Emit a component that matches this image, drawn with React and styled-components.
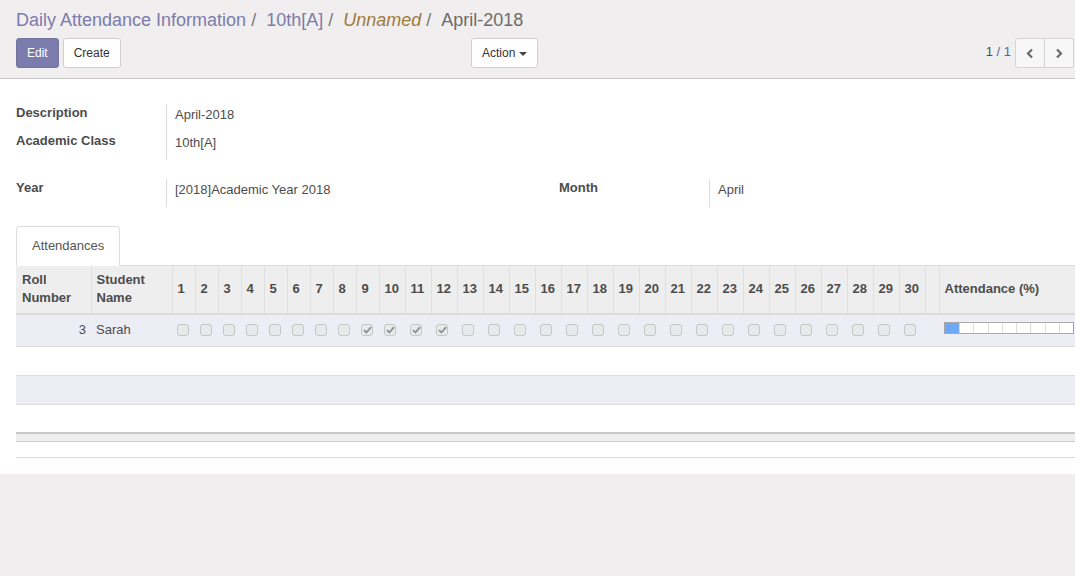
import React from 'react';
import styled, { createGlobalStyle } from 'styled-components';

const Global = createGlobalStyle`
  html, body { margin: 0; padding: 0; background: #f0eeee; overflow: hidden; }
  body { font-family: "Liberation Sans", Arial, sans-serif; font-size: 13px; color: #4c4c4c; }
  #root { width: 1075px; }
  * { box-sizing: border-box; }
`;

const ControlPanel = styled.div`
  background: #f0eeee;
  border-bottom: 1px solid #c8c8c8;
  padding: 7px 1px 10px 16px;
`;

const Breadcrumb = styled.ol`
  display: flex;
  margin: 0 0 5px;
  padding: 0;
  list-style: none;
  font-size: 18px;
  line-height: 26px;
  height: 26px;
`;

const Crumb = styled.li`
  color: ${p => (p.$active ? '#6c6c6c' : p.$unnamed ? '#9e7a3c' : '#7c7bad')};
  font-style: ${p => (p.$unnamed ? 'italic' : 'normal')};
  &:not(:first-child)::before {
    content: "/\\00a0";
    padding: 0 5px;
    color: #777;
    font-style: normal;
  }
`;

const ButtonsRow = styled.div`
  display: grid;
  grid-template-columns: 455px auto 1fr auto;
  align-items: center;
  height: 30px;
`;

const LeftButtons = styled.div`
  display: flex;
  gap: 4px;
`;

const Button = styled.button`
  height: 30px;
  padding: 0 10px;
  font-family: inherit;
  font-size: 12px;
  border-radius: 3px;
  border: 1px solid ${p => (p.$primary ? '#75749f' : '#cfcfcf')};
  background: ${p => (p.$primary ? '#7c7bad' : '#fff')};
  color: ${p => (p.$primary ? '#fff' : '#333')};
  display: inline-flex;
  align-items: center;
  gap: 4px;
`;

const Caret = styled.span`
  display: inline-block;
  width: 0;
  height: 0;
  border-left: 4px solid transparent;
  border-right: 4px solid transparent;
  border-top: 4px solid #444;
  margin-top: 1px;
`;

const Pager = styled.div`
  grid-column: 4;
  display: flex;
  align-items: center;
  gap: 4px;
`;

const PagerValue = styled.span`
  font-size: 13px;
  line-height: 16px;
  margin-top: -2px;
  color: #4c4c4c;
`;

const PagerLimit = styled.span`
  color: #55679a;
`;

const PagerGroup = styled.div`
  display: flex;
`;

const PagerBtn = styled.button`
  width: 30px;
  height: 30px;
  padding: 0;
  border: 1px solid #d4d4d4;
  background: #f7f7f7;
  display: flex;
  align-items: center;
  justify-content: center;
  border-radius: ${p => (p.$side === 'left' ? '3px 0 0 3px' : '0 3px 3px 0')};
  margin-left: ${p => (p.$side === 'left' ? '0' : '-1px')};
`;

const Form = styled.div`
  background: #fff;
  padding: 25px 16px 16px;
`;

const GroupRow = styled.div`
  display: grid;
  grid-template-columns: 543px 1fr;
  & + & { margin-top: 19px; }
`;

const InnerGroup = styled.div`
  display: flex;
  flex-direction: column;
`;

const Field = styled.div`
  display: grid;
  grid-template-columns: 151px 1fr;
`;

const Label = styled.div`
  font-weight: bold;
  line-height: 18px;
  padding: 0 0 10px;
  border-right: 1px solid #ddd;
  color: #4c4c4c;
`;

const Value = styled.div`
  line-height: 18px;
  padding: 2px 0 8px 8px;
  color: #4c4c4c;
`;

const Notebook = styled.div`
  margin-top: 19px;
  margin-right: -16px;
`;

const Tabs = styled.div`
  display: flex;
  border-bottom: 1px solid #ddd;
`;

const Tab = styled.div`
  padding: 10px 15px;
  line-height: 18px;
  border: 1px solid #ddd;
  border-bottom-color: transparent;
  border-radius: 4px 4px 0 0;
  background: #fff;
  margin-bottom: -1px;
  color: #555;
`;

const TableWrap = styled.div`
  overflow: hidden;
`;

const Table = styled.table`
  border-collapse: collapse;
  table-layout: fixed;
  width: 1073px;
`;

const Col = styled.col`
  width: ${p => p.$w}px;
`;

const Th = styled.th`
  background: #eee;
  font-weight: bold;
  text-align: left;
  vertical-align: middle;
  padding: 5px 5px 6px;
  line-height: 18px;
  border-left: 1px solid #dfdfdf;
  border-bottom: 2px solid #dcdcdc;
  color: #4c4c4c;
  white-space: normal;
  &:first-child { border-left: none; padding-left: 6px; }
`;

const Tr = styled.tr`
  background: ${p => (p.$odd ? '#ededf6' : '#fff')};
`;

const Td = styled.td`
  padding: 0 5px;
  height: ${p => p.$h || 29}px;
  border-bottom: 1px solid #ddd;
  vertical-align: middle;
  text-align: ${p => (p.$right ? 'right' : 'left')};
  white-space: nowrap;
  overflow: hidden;
  line-height: 18px;
`;

const FootTd = styled.td`
  height: 8px;
  padding: 0;
  background: #eee;
  border-top: 2px solid #c8c8c8;
  border-bottom: 1px solid #ccc;
`;

const Check = styled.span`
  display: inline-flex;
  align-items: center;
  justify-content: center;
  width: 12px;
  height: 12px;
  border: 1px solid #c6c6c9;
  border-radius: 3px;
  background: #e9e9ec;
  vertical-align: middle;
  margin-top: -2px;
`;

const Bar = styled.div`
  display: grid;
  grid-template-columns: repeat(9, 1fr);
  width: 130px;
  height: 12px;
  border: 1px solid #a9a9a9;
  background: #fff;
  margin-top: -4px;
`;

const Seg = styled.div`
  border-left: 1px solid #ddd;
  background: ${p => (p.$fill ? '#6ea8f7' : 'transparent')};
  &:first-child { border-left: none; }
`;

const BottomRule = styled.div`
  margin-top: 15px;
  margin-right: -16px;
  border-top: 1px solid #ddd;
`;

const Chevron = ({ dir }) => (
  <svg width="8" height="11" viewBox="0 0 8 11">
    <polyline
      points={dir === 'left' ? '6,1.5 2,5.5 6,9.5' : '2,1.5 6,5.5 2,9.5'}
      fill="none"
      stroke="#6a6a6a"
      strokeWidth="2.2"
    />
  </svg>
);

const CheckMark = () => (
  <svg width="9" height="8" viewBox="0 0 9 8">
    <path d="M1 4.2 L3.4 6.5 L8 1.2" fill="none" stroke="#8e8e8e" strokeWidth="1.8" />
  </svg>
);

const days = Array.from({ length: 30 }, (_, i) => i + 1);
const checked = new Set([9, 10, 11, 12]);

export default function App() {
  return (
    <>
      <Global />
      <ControlPanel>
        <Breadcrumb>
          <Crumb>Daily Attendance Information</Crumb>
          <Crumb>10th[A]</Crumb>
          <Crumb $unnamed>Unnamed</Crumb>
          <Crumb $active>April-2018</Crumb>
        </Breadcrumb>
        <ButtonsRow>
          <LeftButtons>
            <Button $primary>Edit</Button>
            <Button>Create</Button>
          </LeftButtons>
          <Button>
            Action <Caret />
          </Button>
          <Pager>
            <PagerValue>
              1 <PagerLimit>/ 1</PagerLimit>
            </PagerValue>
            <PagerGroup>
              <PagerBtn $side="left"><Chevron dir="left" /></PagerBtn>
              <PagerBtn $side="right"><Chevron dir="right" /></PagerBtn>
            </PagerGroup>
          </Pager>
        </ButtonsRow>
      </ControlPanel>

      <Form>
        <GroupRow>
          <InnerGroup>
            <Field>
              <Label>Description</Label>
              <Value>April-2018</Value>
            </Field>
            <Field>
              <Label>Academic Class</Label>
              <Value>10th[A]</Value>
            </Field>
          </InnerGroup>
          <InnerGroup />
        </GroupRow>
        <GroupRow>
          <InnerGroup>
            <Field>
              <Label>Year</Label>
              <Value>[2018]Academic Year 2018</Value>
            </Field>
          </InnerGroup>
          <InnerGroup>
            <Field>
              <Label>Month</Label>
              <Value>April</Value>
            </Field>
          </InnerGroup>
        </GroupRow>

        <Notebook>
          <Tabs>
            <Tab>Attendances</Tab>
          </Tabs>
          <TableWrap>
            <Table>
              <colgroup>
                <Col $w={75} />
                <Col $w={81} />
                {days.map(d => (
                  <Col key={d} $w={d < 10 ? 23 : 26} />
                ))}
                <Col $w={14} />
                <Col $w={150} />
              </colgroup>
              <thead>
                <tr>
                  <Th>Roll Number</Th>
                  <Th>Student Name</Th>
                  {days.map(d => (
                    <Th key={d}>{d}</Th>
                  ))}
                  <Th />
                  <Th>Attendance (%)</Th>
                </tr>
              </thead>
              <tbody>
                <Tr $odd>
                  <Td $h={32} $right>3</Td>
                  <Td $h={32}>Sarah</Td>
                  {days.map(d => (
                    <Td key={d} $h={32}>
                      <Check>{checked.has(d) && <CheckMark />}</Check>
                    </Td>
                  ))}
                  <Td $h={32} />
                  <Td $h={32}>
                    <Bar>
                      {Array.from({ length: 9 }, (_, i) => (
                        <Seg key={i} $fill={i === 0} />
                      ))}
                    </Bar>
                  </Td>
                </Tr>
                {[false, true, false].map((odd, i) => (
                  <Tr key={i} $odd={odd}>
                    <Td colSpan={34}>&nbsp;</Td>
                  </Tr>
                ))}
              </tbody>
              <tfoot>
                <tr>
                  <FootTd colSpan={34} />
                </tr>
              </tfoot>
            </Table>
          </TableWrap>
        </Notebook>
        <BottomRule />
      </Form>
    </>
  );
}
